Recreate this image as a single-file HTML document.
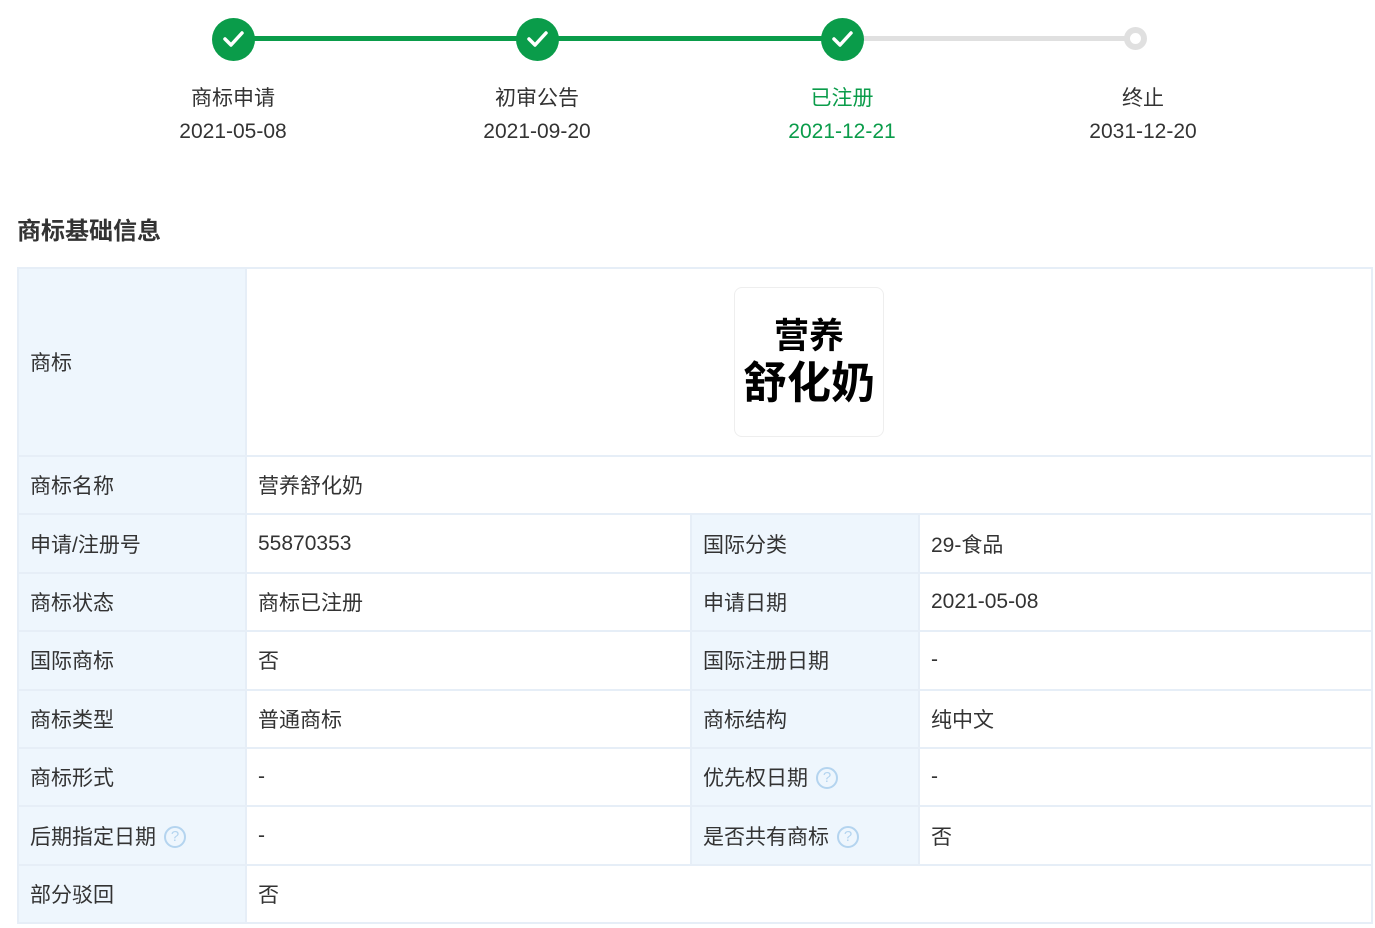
<!DOCTYPE html>
<html><head><meta charset="utf-8"><style>
*{margin:0;padding:0;box-sizing:border-box}
body{width:1375px;height:928px;background:#fff;font-family:"Liberation Sans","Noto Sans CJK SC",sans-serif;color:#333;position:relative;overflow:hidden}
.abs{position:absolute}
.line{position:absolute;top:36px;height:5px}
.dot{position:absolute;width:43px;height:43px;border-radius:50%;background:#0a9c4a;top:18px}
.dot svg{position:absolute;left:10px;top:11px}
.lbl{position:absolute;width:200px;text-align:center;font-size:21px;line-height:24px}
h2{position:absolute;left:17px;top:211px;font-size:24px;font-weight:bold;color:#333}
table{position:absolute;left:17px;top:267px;width:1356px;border-collapse:collapse;table-layout:fixed;font-size:21px}
td{border:2px solid #e6eef7;padding:0 0 0 11px;height:58.4px;vertical-align:middle}
td.k{background:#eef6fd}
.q{display:inline-block;width:22px;height:22px;border:2px solid #b4d4ef;border-radius:50%;color:#b4d4ef;font-size:15px;line-height:18px;text-align:center;vertical-align:3px;margin-left:8px}
</style></head><body>
<div class="line" style="left:240px;width:600px;background:#0a9c4a"></div>
<div class="line" style="left:860px;width:270px;background:#e0e0e0"></div>
<div class="dot" style="left:212px"><svg width="23" height="20" viewBox="0 0 23 20"><path d="M3 10l6 6L20 4" stroke="#fff" stroke-width="3.5" fill="none" stroke-linecap="round" stroke-linejoin="round"/></svg></div>
<div class="dot" style="left:516px"><svg width="23" height="20" viewBox="0 0 23 20"><path d="M3 10l6 6L20 4" stroke="#fff" stroke-width="3.5" fill="none" stroke-linecap="round" stroke-linejoin="round"/></svg></div>
<div class="dot" style="left:821px"><svg width="23" height="20" viewBox="0 0 23 20"><path d="M3 10l6 6L20 4" stroke="#fff" stroke-width="3.5" fill="none" stroke-linecap="round" stroke-linejoin="round"/></svg></div>
<div class="abs" style="left:1124px;top:27px;width:23px;height:23px;border-radius:50%;border:6px solid #e0e0e0;background:#fff"></div>
<div class="lbl" style="left:133px;top:87px">商标申请</div>
<div class="lbl" style="left:133px;top:120px">2021-05-08</div>
<div class="lbl" style="left:437px;top:87px">初审公告</div>
<div class="lbl" style="left:437px;top:120px">2021-09-20</div>
<div class="lbl" style="left:742px;top:87px;color:#0a9c4a">已注册</div>
<div class="lbl" style="left:742px;top:120px;color:#0a9c4a">2021-12-21</div>
<div class="lbl" style="left:1043px;top:87px">终止</div>
<div class="lbl" style="left:1043px;top:120px">2031-12-20</div>
<h2>商标基础信息</h2>
<table>
<colgroup><col style="width:228px"><col style="width:445px"><col style="width:228px"><col></colgroup>
<tr><td class="k" style="height:188px">商标</td><td colspan="3" style="padding:0;position:relative"><div style="position:absolute;left:487px;top:18px;width:150px;height:150px;border:1px solid #eee;border-radius:8px;text-align:center;color:#000;font-weight:bold;font-family:'Noto Sans CJK SC',sans-serif"><div style="font-size:35px;line-height:40px;margin-top:26px">营养</div><div style="font-size:44px;line-height:50px">舒化奶</div></div></td></tr>
<tr><td class="k">商标名称</td><td colspan="3">营养舒化奶</td></tr>
<tr><td class="k">申请/注册号</td><td>55870353</td><td class="k">国际分类</td><td>29-食品</td></tr>
<tr><td class="k">商标状态</td><td>商标已注册</td><td class="k">申请日期</td><td>2021-05-08</td></tr>
<tr><td class="k">国际商标</td><td>否</td><td class="k">国际注册日期</td><td>-</td></tr>
<tr><td class="k">商标类型</td><td>普通商标</td><td class="k">商标结构</td><td>纯中文</td></tr>
<tr><td class="k">商标形式</td><td>-</td><td class="k">优先权日期<span class="q">?</span></td><td>-</td></tr>
<tr><td class="k">后期指定日期<span class="q">?</span></td><td>-</td><td class="k">是否共有商标<span class="q">?</span></td><td>否</td></tr>
<tr><td class="k">部分驳回</td><td colspan="3">否</td></tr>
</table>
</body></html>
